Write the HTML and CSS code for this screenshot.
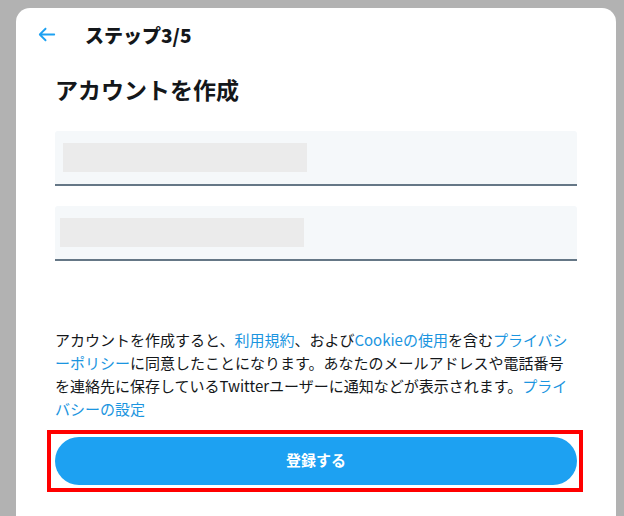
FILE: index.html
```html
<!DOCTYPE html>
<html lang="ja">
<head>
    <meta charset="UTF-8">
    <meta name="viewport" content="width=device-width, initial-scale=1.0">
    <title>アカウントを作成</title>
    <link rel="stylesheet" href="styles.css">
</head>
<body>
    <div class="modal">
        <div class="modal-head">
            <svg class="back" viewBox="0 0 24 24"><path d="M20 11H7.414l4.293-4.293c.39-.39.39-1.023 0-1.414s-1.023-.39-1.414 0l-6 6c-.39.39-.39 1.023 0 1.414l6 6c.195.195.45.293.707.293s.512-.098.707-.293c.39-.39.39-1.023 0-1.414L7.414 13H20c.553 0 1-.447 1-1s-.447-1-1-1z"/></svg>
            <span class="step">ステップ3/5</span>
        </div>
        <div class="modal-body">
            <h1>アカウントを作成</h1>
            <div class="field"><div class="mask"></div></div>
            <div class="field second"><div class="mask"></div></div>
            <p class="note">アカウントを作成すると、<a href="#">利用規約</a>、および<a href="#">Cookieの使用</a>を含む<a href="#">プライバシーポリシー</a>に同意したことになります。あなたのメールアドレスや電話番号を連絡先に保存しているTwitterユーザーに通知などが表示されます。<a href="#">プライバシーの設定</a></p>
            <div class="mark">
                <button class="signup">登録する</button>
            </div>
        </div>
    </div>
</body>
</html>
```

FILE: styles.css
```css
* {
    margin: 0;
    padding: 0;
    box-sizing: border-box;
}
html, body {
    height: 100%;
    overflow: hidden;
}
body {
    background: #b2b2b2;
    font-family: "Noto Sans CJK JP", sans-serif;
    color: #14171a;
}
.modal {
    width: 600px;
    height: calc(100% - 8px);
    margin: 8px 0 0 16px;
    background: #fff;
    border-radius: 14px 14px 0 0;
}
.modal-head {
    height: 53px;
    display: flex;
    align-items: center;
    padding-left: 19px;
}
.back {
    width: 23px;
    height: 23px;
    fill: #1da1f2;
}
.step {
    margin-left: 27px;
    font-size: 19px;
    font-weight: 800;
    line-height: 24px;
}
.modal-body {
    padding: 0 39px;
}
h1 {
    font-size: 23px;
    font-weight: 700;
    line-height: 30px;
    margin-top: 13px;
}
.field {
    height: 55px;
    margin-top: 27px;
    background: #f5f8fa;
    border-bottom: 2px solid #657786;
    border-radius: 3px 3px 0 0;
    padding: 12px 0 0 8px;
}
.field.second {
    margin-top: 20px;
    padding-left: 5px;
}
.mask {
    width: 244px;
    height: 29px;
    background: #ebebeb;
}
.note {
    margin-top: 67px;
    font-size: 15px;
    line-height: 23px;
}
.note a {
    color: #1b95e0;
    text-decoration: none;
}
.mark {
    margin: 10px -6px 0 -8px;
    border: 4px solid #ff0000;
    padding: 3px 2px 3px 4px;
}
.signup {
    display: block;
    width: 100%;
    height: 48px;
    border: none;
    border-radius: 24px;
    background: #1da1f2;
    color: #fff;
    font-family: "Noto Sans CJK JP", sans-serif;
    font-size: 15px;
    font-weight: 700;
    line-height: 20px;
    padding-bottom: 3px;
}
```
